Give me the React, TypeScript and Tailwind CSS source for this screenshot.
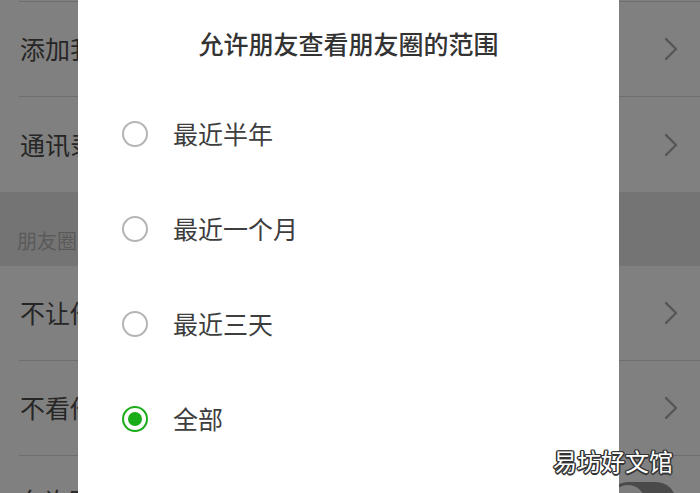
import React from "react";

type Option = { label: string; checked?: boolean };

const options: Option[] = [
  { label: "最近半年" },
  { label: "最近一个月" },
  { label: "最近三天" },
  { label: "全部", checked: true },
];

function Chevron() {
  return (
    <svg width="14" height="24" viewBox="0 0 14 24" className="shrink-0">
      <polyline points="2,2 12,12 2,22" fill="none" stroke="#565656" strokeWidth="2.4" strokeLinecap="round" strokeLinejoin="round" />
    </svg>
  );
}

function Row({ label, last }: { label: string; last?: boolean }) {
  return (
    <div className="pl-[19px]">
      <div
        className={`flex h-[95px] items-center justify-between pl-px pr-[22px] ${last ? "" : "border-b border-[#6e6e6e]"}`}
      >
        <span className="text-[25px] text-[#262626]">{label}</span>
        <Chevron />
      </div>
    </div>
  );
}

function Radio({ checked }: { checked?: boolean }) {
  if (checked) {
    return (
      <span className="flex h-[26px] w-[26px] shrink-0 items-center justify-center rounded-full border-[2.5px] border-[#1aad19]">
        <span className="h-[14px] w-[14px] rounded-full bg-[#1aad19]" />
      </span>
    );
  }
  return <span className="h-[26px] w-[26px] shrink-0 rounded-full border-2 border-[#b4b4b4]" />;
}

export default function App() {
  return (
    <div className="relative h-[493px] w-[700px] overflow-hidden bg-[#808080] font-['Noto_Sans_CJK_SC','Noto_Sans',sans-serif]">
      {/* settings list behind the mask */}
      <div className="ml-[19px] h-[2px] border-b border-[#6e6e6e]" />
      <Row label="添加我的方式" />
      <Row label="通讯录黑名单" last />
      <div className="flex h-[74px] items-end bg-[#747474] pb-[11px] pl-[17px]">
        <span className="text-[20px] leading-[28px] text-[#5a5a5a]">朋友圈</span>
      </div>
      <Row label="不让他（她）看" />
      <Row label="不看他（她）" />
      <div className="pl-[19px]">
        <div className="flex h-[95px] items-start justify-between pr-[24px] pt-[26px]">
          <span className="text-[25px] text-[#262626]">允许陌生人查看十条朋友圈</span>
          <span className="flex h-[40px] w-[68px] items-center rounded-full bg-[#4a4a4a] pl-[3px]">
            <span className="h-[34px] w-[34px] rounded-full bg-[#7c7c7c]" />
          </span>
        </div>
      </div>

      {/* dialog */}
      <div className="absolute left-[78px] top-0 h-full w-[541px] bg-white">
        <h2 className="pt-[25px] text-center text-[25px] font-medium leading-[36px] text-[#333333]">
          允许朋友查看朋友圈的范围
        </h2>
        <ul className="mt-[25px]">
          {options.map((o) => (
            <li key={o.label} className="flex h-[95px] items-center gap-[25px] pl-[44px]">
              <Radio checked={o.checked} />
              <span className="text-[25px] text-[#3d3d3d]">{o.label}</span>
            </li>
          ))}
        </ul>
      </div>

      {/* watermark */}
      <div className="absolute left-[553px] top-[445px] text-[24px] leading-[32px] text-white [text-shadow:1px_1px_0_#333,-1px_-1px_0_#333,1px_-1px_0_#333,-1px_1px_0_#333,0_1.5px_0_#333,0_-1.5px_0_#333,1.5px_0_0_#333,-1.5px_0_0_#333]">
        易坊好文馆
      </div>
    </div>
  );
}
